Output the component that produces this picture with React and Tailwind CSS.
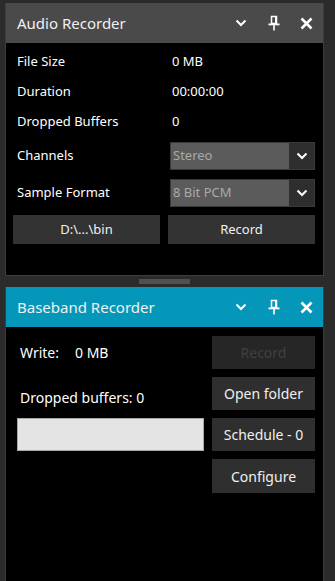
import { useState } from "react";

const font = { fontFamily: '"Noto Sans", "Open Sans", sans-serif' };

function Chevron({ className = "" }) {
    return (
        <svg width="12" height="8" viewBox="0 0 12 8" className={className}>
            <path d="M1.5 1.5 L6 6 L10.5 1.5" fill="none" stroke="currentColor" strokeWidth="2" />
        </svg>
    );
}

function Pin() {
    return (
        <svg width="12" height="16" viewBox="0 0 12 16">
            <path d="M3.5 1.5 H8.5 V8.5 H3.5 Z" fill="none" stroke="currentColor" strokeWidth="1.5" />
            <rect x="7" y="1" width="2" height="8" fill="currentColor" />
            <rect x="0.5" y="8.5" width="11" height="1.8" fill="currentColor" />
            <rect x="5.2" y="10" width="1.6" height="5.5" fill="currentColor" />
        </svg>
    );
}

function Close() {
    return (
        <svg width="13" height="13" viewBox="0 0 13 13">
            <path d="M1.5 1.5 L11.5 11.5 M11.5 1.5 L1.5 11.5" fill="none" stroke="currentColor" strokeWidth="2.6" />
        </svg>
    );
}

// Barra de título del panel acoplable
function TitleBar({ title, color }) {
    return (
        <div className={`flex items-center h-[40px] shrink-0 pl-[11px] text-white ${color}`}>
            <span className="text-[15px] flex-1 text-[#f0f0f0]">{title}</span>
            <div className="flex items-center">
                <span className="w-[33px] flex justify-center"><Chevron /></span>
                <span className="w-[33px] flex justify-center"><Pin /></span>
                <span className="w-[33px] flex justify-center"><Close /></span>
            </div>
        </div>
    );
}

function Combo({ value }) {
    return (
        <div className="flex h-[28px] border border-[#3a3a3a] bg-[#5b5b5b]">
            <div className="flex-1 flex items-center pl-[2px] text-[#a9a9a9] text-[13px]">{value}</div>
            <div className="w-[25px] bg-[#2e2e2e] flex items-center justify-center text-white">
                <Chevron />
            </div>
        </div>
    );
}

export default function App() {
    const [rows] = useState([
        { label: "File Size", value: "0 MB" },
        { label: "Duration", value: "00:00:00" },
        { label: "Dropped Buffers", value: "0" },
    ]);

    return (
        <div className="w-[335px] h-[581px] bg-[#2b2b2b] overflow-hidden pt-[3px] pl-[5px] pr-[11px] flex flex-col" style={font}>
            {/* Audio Recorder */}
            <div className="h-[273px] border-x border-b border-[#3d3d3d] bg-black flex flex-col shrink-0">
                <TitleBar title="Audio Recorder" color="bg-[#4a4a4a]" />
                <div className="pt-[4px] text-[13px] text-white">
                    {rows.map((r) => (
                        <div key={r.label} className="grid grid-cols-[155px_1fr] h-[30px] items-center pl-[11px]">
                            <span>{r.label}</span>
                            <span>{r.value}</span>
                        </div>
                    ))}
                    <div className="grid grid-cols-[153px_1fr] items-center pl-[11px] pr-[8px] mt-[5px]">
                        <span>Channels</span>
                        <Combo value="Stereo" />
                    </div>
                    <div className="grid grid-cols-[153px_1fr] items-center pl-[11px] pr-[8px] mt-[9px]">
                        <span>Sample Format</span>
                        <Combo value="8 Bit PCM" />
                    </div>
                    <div className="grid grid-cols-2 gap-[8px] pl-[7px] pr-[8px] mt-[8px]">
                        <button className="h-[29px] bg-[#333333] text-[#f0f0f0]">D:\...\bin</button>
                        <button className="h-[29px] bg-[#333333] text-[#f0f0f0]">Record</button>
                    </div>
                </div>
            </div>

            {/* Separador */}
            <div className="h-[11px] flex items-center justify-center shrink-0">
                <div className="w-[51px] h-[5px] bg-[#505050]" />
            </div>

            {/* Baseband Recorder */}
            <div className="flex-1 border-x border-[#3d3d3d] bg-black flex flex-col">
                <TitleBar title="Baseband Recorder" color="bg-[#0597b9]" />
                <div className="flex gap-[8px] pl-[11px] pr-[8px] pt-[9px] text-[14px] text-white">
                    <div className="flex-1 flex flex-col">
                        <div className="h-[33px] flex items-center pl-[3px]">
                            <span className="w-[55px]">Write:</span>
                            <span>0 MB</span>
                        </div>
                        <div className="h-[41px] mt-[8px] flex items-center pl-[3px]">Dropped buffers: 0</div>
                        <div className="h-[33px] bg-[#e4e4e4] border border-[#a8a8a8]" />
                    </div>
                    <div className="w-[103px] flex flex-col gap-[8px]">
                        <button className="h-[33px] bg-[#262626] text-[#404040]">Record</button>
                        <button className="h-[33px] bg-[#2f2f2f] text-[#f0f0f0]">Open folder</button>
                        <button className="h-[33px] bg-[#2f2f2f] text-[#f0f0f0]">Schedule - 0</button>
                        <button className="h-[34px] bg-[#2f2f2f] text-[#f0f0f0]">Configure</button>
                    </div>
                </div>
            </div>
        </div>
    );
}
